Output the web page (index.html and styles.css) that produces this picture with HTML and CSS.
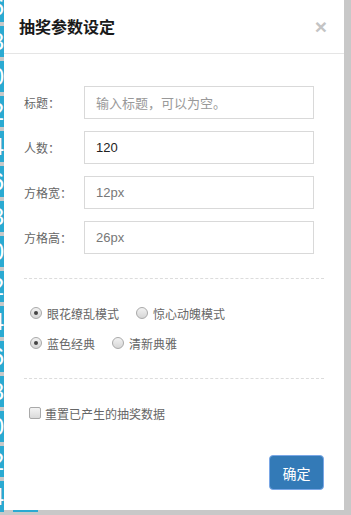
FILE: index.html
```html
<!DOCTYPE html>
<html lang="zh-CN">
<head>
<meta charset="utf-8">
<title>抽奖参数设定</title>
<link rel="stylesheet" href="styles.css">
</head>
<body>
<div class="board">
  <div class="cell">6</div><div class="cell">7</div>
  <div class="cell">8</div><div class="cell">9</div>
  <div class="cell">0</div><div class="cell">1</div>
  <div class="cell">2</div><div class="cell">3</div>
  <div class="cell">4</div><div class="cell">5</div>
  <div class="cell">6</div><div class="cell">7</div>
  <div class="cell">8</div><div class="cell">9</div>
  <div class="cell">0</div><div class="cell">1</div>
  <div class="cell">2</div><div class="cell">3</div>
  <div class="cell">4</div><div class="cell">5</div>
  <div class="cell">6</div><div class="cell">7</div>
  <div class="cell">8</div><div class="cell">9</div>
  <div class="cell">0</div><div class="cell">1</div>
  <div class="cell">2</div><div class="cell">3</div>
  <div class="cell">4</div><div class="cell cell-mid">25</div>
</div>

<div class="modal">
  <div class="modal-header">
    <h4 class="modal-title">抽奖参数设定</h4>
    <span class="close">×</span>
  </div>
  <div class="modal-body">
    <div class="fields">
      <div class="field">
        <label class="field-label">标题：</label>
        <div class="input placeholder">输入标题，可以为空。</div>
      </div>
      <div class="field">
        <label class="field-label">人数：</label>
        <div class="input value-dark">120</div>
      </div>
      <div class="field">
        <label class="field-label">方格宽：</label>
        <div class="input value-grey">12px</div>
      </div>
      <div class="field">
        <label class="field-label">方格高：</label>
        <div class="input value-grey">26px</div>
      </div>
    </div>
    <hr class="dash">
    <div class="options">
      <div class="radio-row">
        <span class="opt"><span class="radio checked"></span>眼花缭乱模式</span>
        <span class="opt"><span class="radio"></span>惊心动魄模式</span>
      </div>
      <div class="radio-row">
        <span class="opt"><span class="radio checked"></span>蓝色经典</span>
        <span class="opt"><span class="radio"></span>清新典雅</span>
      </div>
    </div>
    <hr class="dash">
    <div class="check-row">
      <span class="checkbox"></span>重置已产生的抽奖数据
    </div>
  </div>
  <div class="modal-footer">
    <button class="btn-primary">确定</button>
  </div>
</div>
</body>
</html>
```

FILE: styles.css
```css
html, body {
  margin: 0;
  padding: 0;
  overflow: hidden;
}
body {
  width: 351px;
  height: 515px;
  background: #c8c8c8;
  position: relative;
  font-family: "Liberation Sans", "Noto Sans CJK SC", sans-serif;
}

.board {
  display: grid;
  grid-template-columns: 25px 25px;
  grid-auto-rows: 31px;
  column-gap: 9px;
  row-gap: 4px;
  margin-left: -21px;
  margin-top: -9px;
}
.cell {
  background: #2aaad2;
  color: #fff;
  font-size: 24px;
  line-height: 31px;
  text-align: right;
  overflow: hidden;
}
.cell-mid {
  text-align: center;
}

.modal {
  position: absolute;
  left: 4px;
  top: 0;
  width: 340px;
  height: 510px;
  background: #fff;
  display: flex;
  flex-direction: column;
}

.modal-header {
  display: flex;
  align-items: center;
  justify-content: space-between;
  padding: 15px 15px;
  border-bottom: 1px solid #e5e5e5;
}
.modal-title {
  margin: 0;
  font-size: 16px;
  line-height: 23px;
  font-weight: bold;
  color: #1a1a1a;
  font-family: "Noto Sans CJK SC", sans-serif;
}
.close {
  font-size: 21px;
  font-weight: bold;
  line-height: 1;
  color: #c4c4c4;
  margin-right: 2px;
  font-family: "Liberation Sans", sans-serif;
}

.modal-body {
  padding: 32px 20px 0 20px;
  flex: 1;
}

.fields {
  display: flex;
  flex-direction: column;
  gap: 12px;
}
.field {
  display: flex;
  align-items: center;
}
.field-label {
  width: 60px;
  font-size: 12px;
  color: #666;
  font-family: "Noto Sans CJK SC", sans-serif;
}
.input {
  box-sizing: border-box;
  width: 230px;
  height: 33px;
  border: 1px solid #d9d9d9;
  padding: 0 11px;
  font-size: 13px;
  line-height: 31px;
}
.placeholder {
  color: #999;
  font-family: "Noto Sans CJK SC", sans-serif;
}
.value-dark {
  color: #222;
}
.value-grey {
  color: #777;
}

.dash {
  border: 0;
  border-top: 1px dashed #dcdcdc;
  margin: 24px 0 0 0;
  height: 0;
}

.options {
  display: flex;
  flex-direction: column;
  gap: 10px;
  padding: 24px 0 0 6px;
}
.radio-row {
  display: flex;
  align-items: center;
  gap: 17px;
  height: 20px;
}
.opt {
  display: flex;
  align-items: center;
  gap: 5px;
  font-size: 12px;
  color: #666;
  font-family: "Noto Sans CJK SC", sans-serif;
}
.radio {
  box-sizing: border-box;
  width: 12px;
  height: 12px;
  border-radius: 50%;
  border: 1px solid #a9a9a9;
  background: linear-gradient(#f2f2f2, #d6d6d6);
  display: flex;
  align-items: center;
  justify-content: center;
}
.radio.checked::after {
  content: "";
  width: 4px;
  height: 4px;
  border-radius: 50%;
  background: #444;
}

.options + .dash {
  margin-top: 25px;
}

.check-row {
  display: flex;
  align-items: center;
  gap: 4px;
  height: 20px;
  margin-top: 24px;
  padding-left: 5px;
  font-size: 12px;
  color: #666;
  font-family: "Noto Sans CJK SC", sans-serif;
}
.checkbox {
  box-sizing: border-box;
  width: 12px;
  height: 12px;
  border-radius: 2px;
  border: 1px solid #a9a9a9;
  background: linear-gradient(#f4f4f4, #dadada);
}

.modal-footer {
  display: flex;
  justify-content: flex-end;
  padding: 0 20px 20px 20px;
}
.btn-primary {
  box-sizing: border-box;
  width: 55px;
  height: 35px;
  background: #337ab7;
  border: 1px solid #7aa7e6;
  border-radius: 4px;
  color: #fff;
  font-size: 14px;
  font-family: "Noto Sans CJK SC", sans-serif;
  padding: 0;
}
```
